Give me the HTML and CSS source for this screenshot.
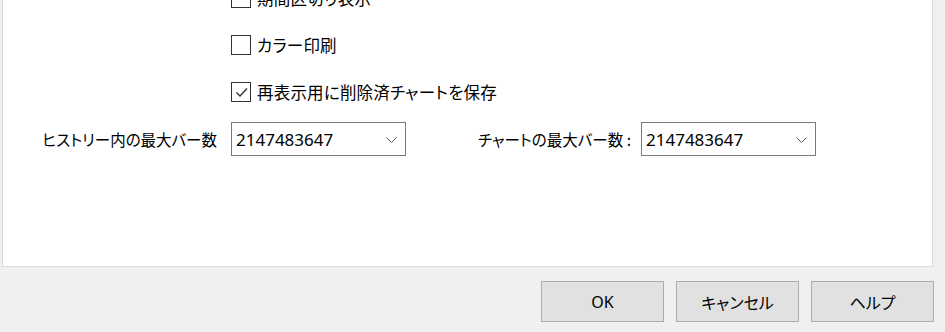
FILE: index.html
```html
<!DOCTYPE html>
<html lang="ja">
<head>
<meta charset="utf-8">
<link rel="stylesheet" href="styles.css">
</head>
<body>
<div class="dialog">
  <div class="panel">
    <div class="checks">
      <label class="check"><span class="box"></span><span class="ctext">期間区切り表示</span></label>
      <label class="check"><span class="box"></span><span class="ctext">カラー印刷</span></label>
      <label class="check"><span class="box">
        <svg width="17" height="17" viewBox="0 0 17 17"><path d="M3.5 8.5 L7 12 L14 4.5" fill="none" stroke="#333" stroke-width="1.4"/></svg>
      </span><span class="ctext">再表示用に削除済チャートを保存</span></label>
    </div>
    <div class="combos">
      <div class="lab1">ヒストリー内の最大バー数</div>
      <div class="combo"><span class="val">2147483647</span>
        <svg class="chev" width="11" height="6" viewBox="0 0 11 6"><path d="M0.5 0.5 L5.5 5.5 L10.5 0.5" fill="none" stroke="#555" stroke-width="1"/></svg>
      </div>
      <div class="lab2">チャートの最大バー数 :</div>
      <div class="combo"><span class="val">2147483647</span>
        <svg class="chev" width="11" height="6" viewBox="0 0 11 6"><path d="M0.5 0.5 L5.5 5.5 L10.5 0.5" fill="none" stroke="#555" stroke-width="1"/></svg>
      </div>
    </div>
  </div>
  <div class="buttons">
    <button class="btn">OK</button>
    <button class="btn">キャンセル</button>
    <button class="btn">ヘルプ</button>
  </div>
</div>
</body>
</html>
```

FILE: styles.css
```css
html, body {
  margin: 0;
  padding: 0;
  background: #f0f0f0;
}
body {
  width: 945px;
  height: 332px;
  overflow: hidden;
  font-family: "Noto Sans CJK JP", sans-serif;
  color: #000;
}
.dialog {
  display: flex;
  flex-direction: column;
}
.panel {
  box-sizing: border-box;
  margin-left: 2px;
  width: 931px;
  height: 267px;
  background: #fff;
  border: 1px solid #dadada;
  border-top: none;
  overflow: hidden;
  display: flex;
  flex-direction: column;
}
.checks {
  margin-top: -12px;
  padding-left: 228px;
  display: flex;
  flex-direction: column;
  gap: 27px;
}
.check {
  display: flex;
  align-items: center;
  height: 20px;
  font-size: 16.5px;
  font-feature-settings: "palt";
  letter-spacing: 0.2px;
}
.box {
  box-sizing: border-box;
  width: 20px;
  height: 20px;
  border: 1px solid #333;
  display: flex;
  align-items: center;
  justify-content: center;
  flex: none;
}
.ctext {
  margin-left: 6px;
  line-height: 20px;
}
.combos {
  margin-top: 20px;
  display: flex;
  align-items: center;
  font-size: 15.5px;
  font-feature-settings: "palt";
}
.lab1 {
  width: 214px;
  text-align: right;
  margin-right: 14px;
}
.lab2 {
  width: 225px;
  text-align: right;
  margin-right: 10px;
}
.combo {
  box-sizing: border-box;
  width: 175px;
  height: 34px;
  border: 1px solid #7a7a7a;
  display: flex;
  align-items: center;
  justify-content: space-between;
  padding: 0 8px 0 4px;
}
.val {
  font-family: "Noto Sans", sans-serif;
  font-size: 17px;
}
.chev {
  margin-top: 1px;
}
.buttons {
  display: flex;
  gap: 12px;
  padding-left: 541px;
  margin-top: 14px;
}
.btn {
  box-sizing: border-box;
  width: 123px;
  height: 41px;
  background: #e1e1e1;
  border: 1px solid #adadad;
  font-family: "Noto Sans", "Noto Sans CJK JP", sans-serif;
  font-size: 16px;
  font-feature-settings: "palt";
  color: #000;
  padding: 0;
}
```
